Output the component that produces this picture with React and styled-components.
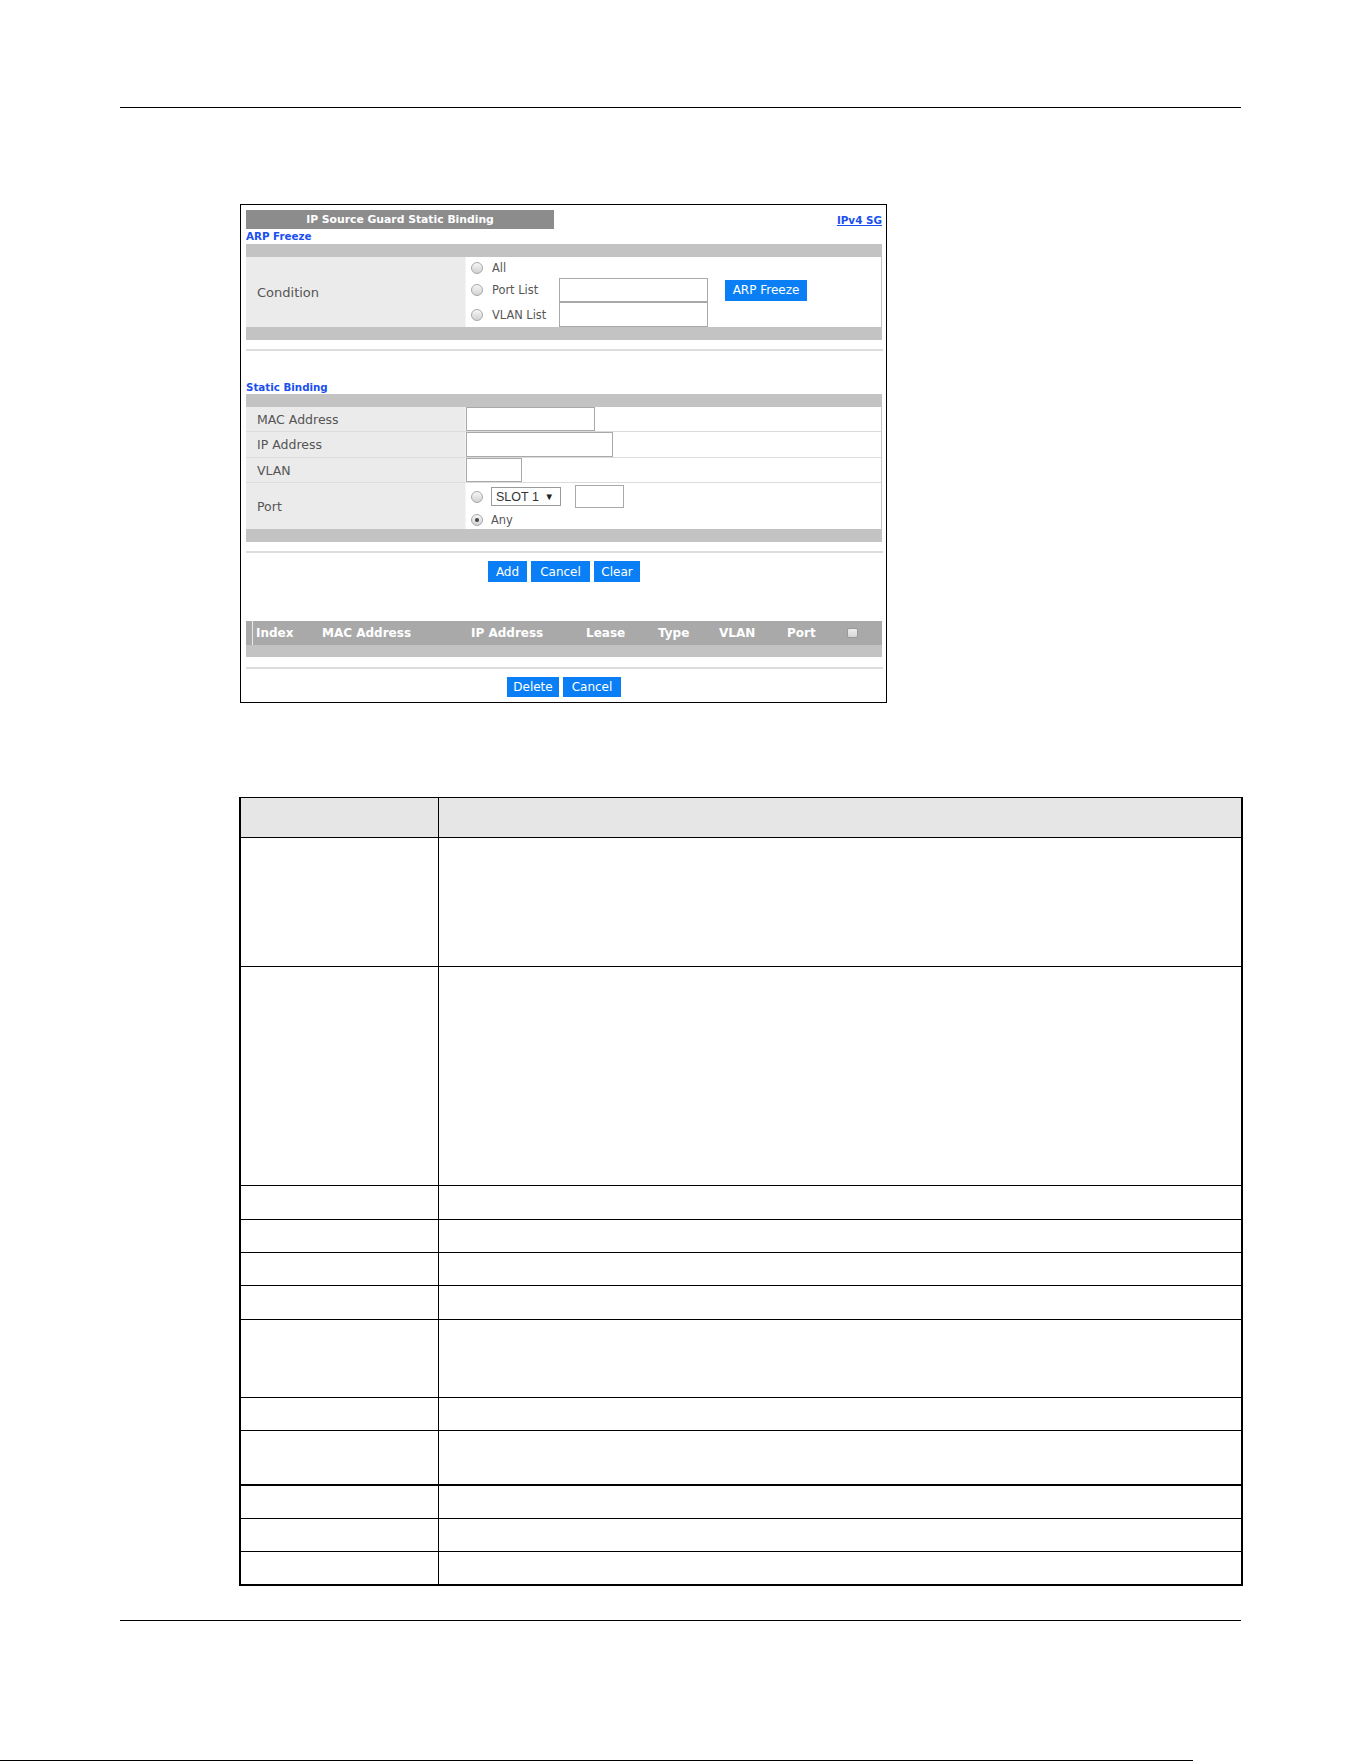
import React from "react";
import styled, { createGlobalStyle } from "styled-components";

const GlobalStyle = createGlobalStyle`
  body {
    margin: 0;
    background: #fff;
  }
`;

const UI_FONT = `"DejaVu Sans", "Liberation Sans", sans-serif`;
const BLUE_TEXT = "#1a4ff0";
const BTN_BLUE = "#0a7ff5";

const Page = styled.div`
  width: 1361px;
  height: 1761px;
  padding-top: 107px;
  box-sizing: border-box;
  overflow: hidden;
`;

const Rule = styled.div`
  margin-top: ${(p) => p.$top || 0}px;
  margin-left: ${(p) => (p.$left ?? 120)}px;
  width: ${(p) => p.$w || 1121}px;
  height: 1px;
  background: #000;
`;

const Frame = styled.div`
  margin: 96px 0 0 240px;
  width: 647px;
  box-sizing: border-box;
  border: 1px solid #000;
  padding: 5px 4px 5px 5px;
  font-family: ${UI_FONT};
`;

const TitleRow = styled.div`
  display: flex;
  justify-content: space-between;
  align-items: center;
  height: 19px;
`;

const TitleBar = styled.div`
  width: 308px;
  height: 19px;
  line-height: 19px;
  background: #8c8c8c;
  color: #fff;
  font-size: 10.8px;
  font-weight: bold;
  text-align: center;
`;

const TopLink = styled.a`
  color: ${BLUE_TEXT};
  font-size: 10.4px;
  font-weight: bold;
  text-decoration: underline;
  cursor: pointer;
`;

const SectionTitle = styled.div`
  margin-top: ${(p) => p.$top || 0}px;
  height: ${(p) => p.$h}px;
  line-height: ${(p) => p.$h}px;
  color: ${BLUE_TEXT};
  font-size: 10.3px;
  font-weight: bold;
`;

const Panel = styled.div`
  background: #c3c3c3;
  padding: 13px 1px 13px 0;
`;

const FieldRow = styled.div`
  display: flex;
  height: ${(p) => p.$h}px;
  box-sizing: border-box;
  border-bottom: ${(p) => (p.$last ? "none" : "1px solid #dcdcdc")};
`;

const FieldLabel = styled.div`
  width: 220px;
  flex-shrink: 0;
  display: flex;
  align-items: center;
  padding-left: 11px;
  box-sizing: border-box;
  background: #ebebeb;
  border-right: 1px solid #f4f4f4;
  color: #555;
  font-size: ${(p) => p.$size || 12.5}px;
`;

const FieldValue = styled.div`
  flex: 1;
  display: flex;
  align-items: stretch;
  background: #fff;
`;

const ConditionGrid = styled.div`
  flex: 1;
  display: grid;
  grid-template-columns: 88px 149px auto;
  grid-template-rows: 21px 24px 25px;
  padding-left: 5px;
`;

const Choice = styled.label`
  display: flex;
  align-items: center;
  gap: 9px;
  color: #555;
  font-size: 11.4px;
  grid-column: 1;
  grid-row: ${(p) => p.$row};
`;

const Radio = styled.span`
  position: relative;
  width: 12px;
  height: 12px;
  flex-shrink: 0;
  box-sizing: border-box;
  border-radius: 50%;
  border: 1px solid #a8a8a8;
  background: linear-gradient(#f6f6f6, #d2d2d2);

  &::after {
    content: "";
    display: ${(p) => (p.$checked ? "block" : "none")};
    position: absolute;
    left: 3px;
    top: 3px;
    width: 4px;
    height: 4px;
    border-radius: 50%;
    background: #444;
  }
`;

const TextBox = styled.input`
  box-sizing: border-box;
  margin: 0;
  padding: 0;
  width: ${(p) => p.$w}px;
  height: ${(p) => (p.$h ? `${p.$h}px` : "auto")};
  border: 1px solid #a9a9a9;
  background: #fff;
  grid-column: ${(p) => p.$col || "auto"};
  grid-row: ${(p) => p.$row || "auto"};
`;

const Button = styled.button`
  height: ${(p) => p.$h || 21}px;
  width: ${(p) => p.$w}px;
  padding: 0;
  border: none;
  background: ${BTN_BLUE};
  color: #fff;
  font-family: ${UI_FONT};
  font-size: 12px;
  cursor: pointer;
`;

const FreezeButton = styled(Button)`
  grid-column: 3;
  grid-row: 2;
  align-self: center;
  margin-left: 17px;
`;

const PortStack = styled.div`
  display: flex;
  flex-direction: column;
  justify-content: center;
  gap: 5px;
  padding-left: 5px;
`;

const PortLine = styled.div`
  display: flex;
  align-items: center;
  gap: 8px;
  color: #555;
  font-size: 11.4px;
`;

const SlotSelect = styled.div`
  width: 70px;
  height: 19px;
  box-sizing: border-box;
  border: 1px solid #9a9a9a;
  display: flex;
  align-items: center;
  justify-content: space-between;
  padding: 0 6px 0 4px;
  font-family: "Liberation Sans", sans-serif;
  font-size: 12.5px;
  color: #333;
`;

const Caret = styled.span`
  font-size: 9.5px;
  color: #222;
`;

const Divider = styled.div`
  margin-top: ${(p) => p.$top}px;
  margin-right: -1px;
  height: 2px;
  background: #dddddd;
`;

const ButtonRow = styled.div`
  margin-top: ${(p) => p.$top}px;
  display: flex;
  justify-content: center;
  gap: ${(p) => p.$gap || 4}px;
`;

const ListHead = styled.div`
  margin-top: 39px;
  display: flex;
  align-items: center;
  height: 24px;
  background: #a9a9a9;
  padding-left: 6px;
`;

const HeadCell = styled.div`
  width: ${(p) => p.$w}px;
  flex-shrink: 0;
  box-sizing: border-box;
  padding-left: ${(p) => p.$pad || 0}px;
  height: 100%;
  display: flex;
  align-items: center;
  border-left: ${(p) => (p.$edge ? "1px solid #e8e8e8" : "none")};
  color: #fff;
  font-size: 12px;
  font-weight: bold;
`;

const HeadCheck = styled.span`
  width: 11px;
  height: 10px;
  box-sizing: border-box;
  border: 1px solid #999;
  border-radius: 2px;
  background: linear-gradient(#eee, #d6d6d6);
`;

const ListBody = styled.div`
  height: 12px;
  background: #c3c3c3;
`;

const DocTable = styled.div`
  margin: 94px 0 0 239px;
  width: 1004px;
  box-sizing: border-box;
  border: 2px solid #000;
  border-top-width: 1px;
`;

const DocRow = styled.div`
  display: grid;
  grid-template-columns: 198px 1fr;
  height: ${(p) => p.$h}px;
  box-sizing: border-box;
  border-bottom: ${(p) => p.$line}px solid #000;
  background: ${(p) => (p.$head ? "#e6e6e6" : "#fff")};
`;

const DocCell = styled.div`
  border-right: ${(p) => (p.$first ? "1px solid #000" : "none")};
`;

const docRows = [
  { h: 40, line: 1, head: true },
  { h: 129, line: 1 },
  { h: 219, line: 1 },
  { h: 34, line: 1 },
  { h: 33, line: 1 },
  { h: 33, line: 1 },
  { h: 34, line: 1 },
  { h: 78, line: 1 },
  { h: 33, line: 1 },
  { h: 55, line: 2 },
  { h: 33, line: 1 },
  { h: 33, line: 1 },
  { h: 32, line: 0 },
];

const listColumns = [
  { label: "Index", w: 70, pad: 3, edge: true },
  { label: "MAC Address", w: 149 },
  { label: "IP Address", w: 115 },
  { label: "Lease", w: 72 },
  { label: "Type", w: 61 },
  { label: "VLAN", w: 68 },
  { label: "Port", w: 60 },
];

export default function App() {
  return (
    <Page>
      <GlobalStyle />
      <Rule />

      <Frame>
        <TitleRow>
          <TitleBar>IP Source Guard Static Binding</TitleBar>
          <TopLink>IPv4 SG</TopLink>
        </TitleRow>

        <SectionTitle $h={15}>ARP Freeze</SectionTitle>
        <Panel>
          <FieldRow $h={70} $last>
            <FieldLabel $size={13}>Condition</FieldLabel>
            <FieldValue>
              <ConditionGrid>
                <Choice $row={1}>
                  <Radio />
                  All
                </Choice>
                <Choice $row={2}>
                  <Radio />
                  Port List
                </Choice>
                <Choice $row={3}>
                  <Radio />
                  VLAN List
                </Choice>
                <TextBox $w={149} $col={2} $row={2} />
                <TextBox $w={149} $col={2} $row={3} />
                <FreezeButton $w={82}>ARP Freeze</FreezeButton>
              </ConditionGrid>
            </FieldValue>
          </FieldRow>
        </Panel>

        <Divider $top={9} />

        <SectionTitle $top={29} $h={14}>
          Static Binding
        </SectionTitle>
        <Panel>
          <FieldRow $h={25}>
            <FieldLabel>MAC Address</FieldLabel>
            <FieldValue>
              <TextBox $w={129} />
            </FieldValue>
          </FieldRow>
          <FieldRow $h={26}>
            <FieldLabel>IP Address</FieldLabel>
            <FieldValue>
              <TextBox $w={147} />
            </FieldValue>
          </FieldRow>
          <FieldRow $h={25}>
            <FieldLabel>VLAN</FieldLabel>
            <FieldValue>
              <TextBox $w={56} />
            </FieldValue>
          </FieldRow>
          <FieldRow $h={46} $last>
            <FieldLabel>Port</FieldLabel>
            <FieldValue>
              <PortStack>
                <PortLine>
                  <Radio />
                  <SlotSelect>
                    SLOT 1 <Caret>▼</Caret>
                  </SlotSelect>
                  <TextBox $w={49} $h={23} style={{ marginLeft: 6 }} />
                </PortLine>
                <PortLine>
                  <Radio $checked />
                  Any
                </PortLine>
              </PortStack>
            </FieldValue>
          </FieldRow>
        </Panel>

        <Divider $top={9} />

        <ButtonRow $top={8}>
          <Button $w={39}>Add</Button>
          <Button $w={59}>Cancel</Button>
          <Button $w={46}>Clear</Button>
        </ButtonRow>

        <ListHead>
          {listColumns.map((c) => (
            <HeadCell key={c.label} $w={c.w} $pad={c.pad} $edge={c.edge}>
              {c.label}
            </HeadCell>
          ))}
          <HeadCell $w={30}>
            <HeadCheck />
          </HeadCell>
        </ListHead>
        <ListBody />

        <Divider $top={10} />

        <ButtonRow $top={8}>
          <Button $w={52} $h={20}>
            Delete
          </Button>
          <Button $w={58} $h={20}>
            Cancel
          </Button>
        </ButtonRow>
      </Frame>

      <DocTable>
        {docRows.map((r, i) => (
          <DocRow key={i} $h={r.h} $line={r.line} $head={r.head}>
            <DocCell $first />
            <DocCell />
          </DocRow>
        ))}
      </DocTable>

      <Rule $top={34} />
      <Rule $top={139} $left={0} $w={1193} />
    </Page>
  );
}
